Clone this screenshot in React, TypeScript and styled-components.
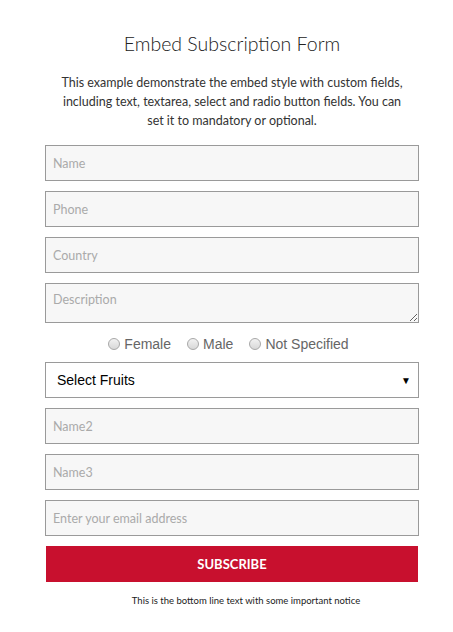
import React from "react";
import styled, { createGlobalStyle } from "styled-components";

const Global = createGlobalStyle`
  html, body { margin: 0; padding: 0; background: #fff; }
  body { font-family: "Lato", "Liberation Sans", sans-serif; }
  * { box-sizing: border-box; }
`;

const Page = styled.div`
  width: 453px;
  padding: 30px 34px 20px 45px;
`;

const Title = styled.h1`
  margin: 0;
  text-align: center;
  font-family: "Lato", sans-serif;
  font-weight: 300;
  font-size: 19.5px;
  line-height: 28px;
  color: #222;
`;

const Intro = styled.p`
  margin: 15px auto 15px;
  width: 352px;
  text-align: center;
  font-family: "Lato", sans-serif;
  font-size: 12.5px;
  line-height: 19px;
  color: #333;
`;

const Form = styled.form`
  display: flex;
  flex-direction: column;
  gap: 10px;
`;

const Input = styled.input`
  display: block;
  width: 374px;
  height: 36px;
  margin: 0;
  padding: 0 7px;
  border: 1px solid #9a9a9a;
  border-radius: 0;
  background: #f7f7f7;
  font-family: "Lato", sans-serif;
  font-size: 12.5px;
  color: #333;
  outline: none;
  &::placeholder { color: #aaa; }
`;

const TextArea = styled.textarea`
  display: block;
  width: 374px;
  height: 40px;
  margin: 0;
  padding: 8px 7px;
  border: 1px solid #9a9a9a;
  border-radius: 0;
  background: #f7f7f7;
  font-family: "Lato", sans-serif;
  font-size: 12.5px;
  resize: vertical;
  outline: none;
  &::placeholder { color: #aaa; }
`;

const RadioRow = styled.div`
  display: flex;
  justify-content: center;
  align-items: center;
  gap: 16px;
  height: 22px;
  margin: 0 0 -3px;
  padding-right: 7px;
  font-family: "Liberation Sans", Arial, sans-serif;
  font-size: 14px;
  color: #666;
`;

const RadioLabel = styled.label`
  display: flex;
  align-items: center;
  gap: 4px;
`;

const RadioDot = styled.span`
  width: 12px;
  height: 12px;
  border-radius: 50%;
  border: 1px solid #a8a8a8;
  background: linear-gradient(#f2f2f2, #d8d8d8);
`;

const SelectBox = styled.div`
  display: flex;
  align-items: center;
  justify-content: space-between;
  width: 374px;
  height: 36px;
  padding: 0 7px 0 11px;
  border: 1px solid #9a9a9a;
  background: #fff;
  font-family: "Liberation Sans", Arial, sans-serif;
  font-size: 14px;
  color: #000;
`;

const Arrow = styled.span`
  font-size: 10px;
  color: #000;
`;

const Button = styled.button`
  display: block;
  width: 372px;
  height: 36px;
  margin: 0 0 0 1px;
  border: none;
  background: #c8102e;
  color: #fff;
  font-family: "Lato", sans-serif;
  font-weight: 700;
  font-size: 13px;
`;

const Notice = styled.p`
  margin: 13px 0 0;
  padding-left: 28px;
  text-align: center;
  font-family: "Lato", sans-serif;
  font-size: 9.5px;
  color: #222;
`;

const genders = ["Female", "Male", "Not Specified"];

export default function App() {
  return (
    <>
      <Global />
      <Page>
        <Title>Embed Subscription Form</Title>
        <Intro>
          This example demonstrate the embed style with custom fields, including text, textarea, select and radio button fields. You can set it to mandatory or optional.
        </Intro>
        <Form>
          <Input placeholder="Name" />
          <Input placeholder="Phone" />
          <Input placeholder="Country" />
          <TextArea placeholder="Description" />
          <RadioRow>
            {genders.map((g) => (
              <RadioLabel key={g}>
                <RadioDot />
                {g}
              </RadioLabel>
            ))}
          </RadioRow>
          <SelectBox>
            <span>Select Fruits</span>
            <Arrow>▼</Arrow>
          </SelectBox>
          <Input placeholder="Name2" />
          <Input placeholder="Name3" />
          <Input placeholder="Enter your email address" />
          <Button type="button">SUBSCRIBE</Button>
        </Form>
        <Notice>This is the bottom line text with some important notice</Notice>
      </Page>
    </>
  );
}
